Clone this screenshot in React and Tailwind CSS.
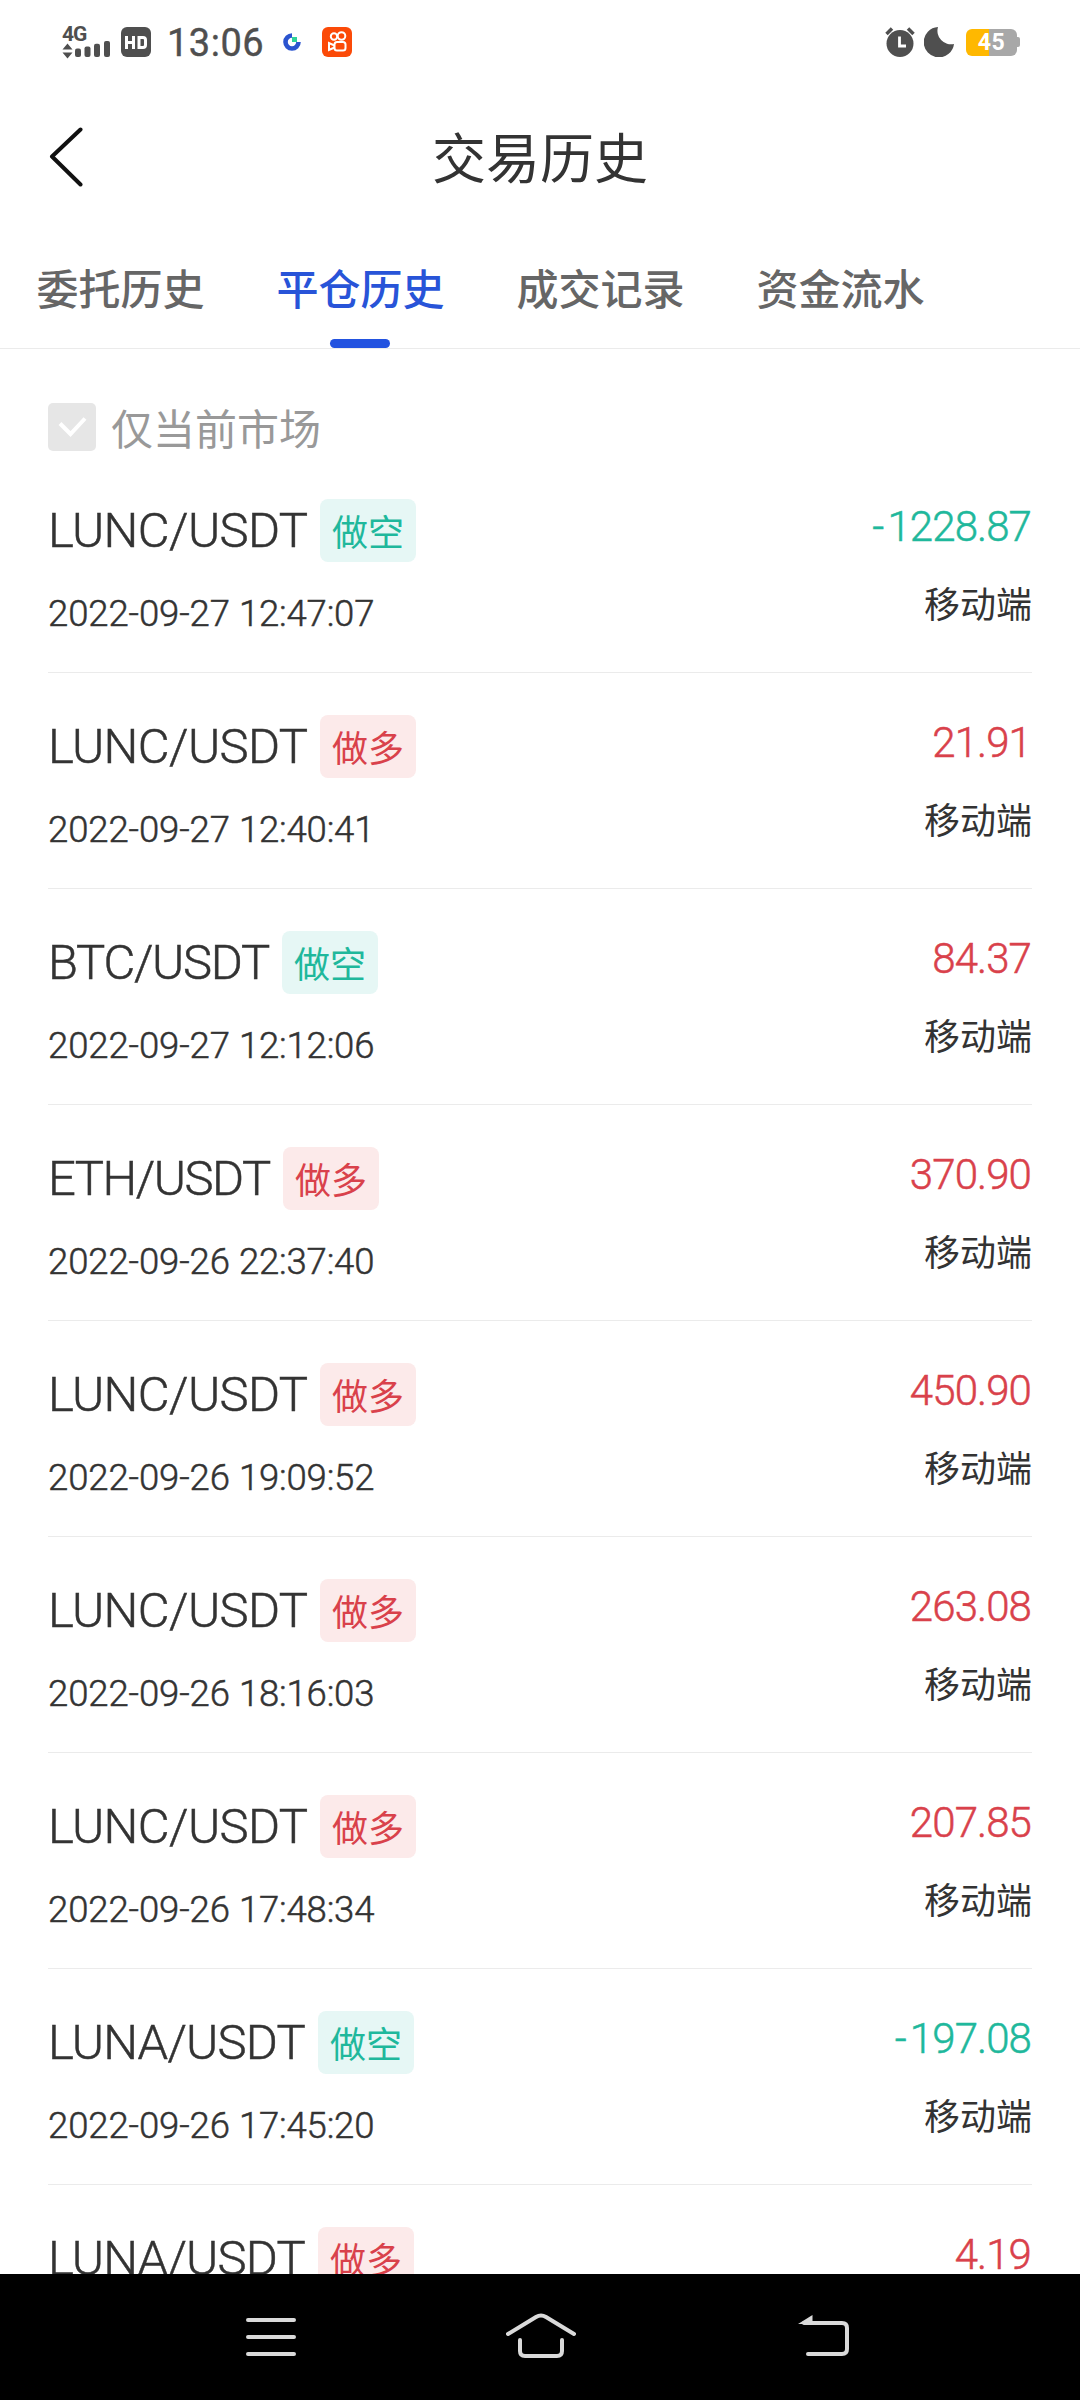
const CJK = `font-['Noto_Sans_CJK_SC',sans-serif]`;
const NUM = `font-['Roboto','Noto_Sans_CJK_SC',sans-serif]`;

const PAIRS = {
  'LUNC/USDT': 'w-[272px] tracking-[-0.6px]',
  'LUNA/USDT': 'w-[270px] tracking-[-0.8px]',
  'BTC/USDT': 'w-[234px] tracking-[-1.3px]',
  'ETH/USDT': 'w-[235px] tracking-[-1.5px]',
};

const ROWS = [
  ['LUNC/USDT', '做空', '2022-09-27', '12:47:07', '-1228.87'],
  ['LUNC/USDT', '做多', '2022-09-27', '12:40:41', '21.91'],
  ['BTC/USDT', '做空', '2022-09-27', '12:12:06', '84.37'],
  ['ETH/USDT', '做多', '2022-09-26', '22:37:40', '370.90'],
  ['LUNC/USDT', '做多', '2022-09-26', '19:09:52', '450.90'],
  ['LUNC/USDT', '做多', '2022-09-26', '18:16:03', '263.08'],
  ['LUNC/USDT', '做多', '2022-09-26', '17:48:34', '207.85'],
  ['LUNA/USDT', '做空', '2022-09-26', '17:45:20', '-197.08'],
  ['LUNA/USDT', '做多', null, null, '4.19'],
];

const TABS = ['委托历史', '平仓历史', '成交记录', '资金流水'];

function StatusBar() {
  return (
    <div className="flex h-[84px] shrink-0 items-center pl-[62px] pr-[60px] text-[#4f4f4f]">
      <div className="flex w-12 flex-col">
        <span className="font-['Roboto',sans-serif] text-[21px] font-bold leading-[18px] tracking-[-1px]">4G</span>
        <svg className="h-[16px] w-12 overflow-visible" viewBox="0 0 48 16" fill="currentColor">
          <path d="M0.5 6.5 5.5 0.5l5 6zM0.5 9.5h10l-5 6z" />
          <rect x="13" y="5.5" width="6" height="8.5" rx="2" />
          <rect x="22.5" y="3.5" width="6" height="10.5" rx="2" />
          <rect x="32" y="0.8" width="6" height="13.2" rx="2" />
          <rect x="42" y="-2" width="6" height="16" rx="2" />
        </svg>
      </div>
      <svg className="ml-[11px] size-[30px]" viewBox="0 0 30 30">
        <rect width="30" height="30" rx="6" fill="#4f4f4f" />
        <path d="M5.5 9v13M12.5 9v13M5.5 15.5h7M18 10.5h4q2.5 0 2.5 2.5v5q0 2.500-2.500 2.500h-4z" fill="none" stroke="#fff" strokeWidth="3" />
      </svg>
      <span className="ml-4 w-[98px] pt-px font-['Roboto',sans-serif] text-[38px] leading-[44px] tracking-[0.5px] [-webkit-text-stroke:0.4px]">13:06</span>
      <svg className="ml-[18px] size-[18px]" viewBox="0 0 18 18">
        <path d="M9 2.500a6.500 6.500 0 1 0 6.500 6.500" fill="none" stroke="#2b54cf" strokeWidth="4.600" />
        <rect x="9" y="4" width="5" height="5" fill="#2fd39a" />
      </svg>
      <svg className="ml-[21px] size-[30px]" viewBox="0 0 30 30">
        <rect width="30" height="30" rx="6" fill="#fb4a08" />
        <g fill="none" stroke="#fff" strokeWidth="2">
          <circle cx="12" cy="9.500" r="3.200" />
          <circle cx="19.500" cy="9" r="3.800" />
          <rect x="12.500" y="15" width="11" height="8.500" rx="2.500" />
          <path d="M12.500 18.500l-5.500-2.500v7l5.500-2.500" />
        </g>
      </svg>
      <div className="ml-auto flex items-center">
        <svg className="h-[30px] w-[30px]" viewBox="0 0 30 30">
          <circle cx="15" cy="16.500" r="13.500" fill="#4f4f4f" />
          <path d="M1.500 7 7 1.500M28.500 7 23 1.500" stroke="#4f4f4f" strokeWidth="3.500" />
          <path d="M14.500 9.500v9.500h6.500" fill="none" stroke="#fff" strokeWidth="2.800" />
        </svg>
        <svg className="ml-[9px] size-[30px]" viewBox="0 0 30 30">
          <path d="M14 0A15.200 15.200 0 1 0 30 17 13.500 13.500 0 0 1 14 0z" fill="#4f4f4f" />
        </svg>
        <div className="ml-3 flex items-center">
          <div className="flex h-[27px] w-[51px] items-center justify-center rounded-[6px] bg-[linear-gradient(90deg,#ffb800_45%,#a8a8a8_45%)] pt-px font-['Roboto',sans-serif] text-[23px] font-bold leading-none tracking-[0.500px] text-white">45</div>
          <div className="h-[10px] w-[3px] rounded-r-[2px] bg-[#a8a8a8]" />
        </div>
      </div>
    </div>
  );
}

function Header() {
  return (
    <div className="flex h-[148px] shrink-0 items-center">
      <svg className="ml-12 h-[62px] w-9" viewBox="0 0 36 62" fill="none" stroke="#111" strokeWidth="4" strokeLinecap="round" strokeLinejoin="round">
        <path d="M32.500 2.500 4 29.500l28.500 28" />
      </svg>
      <h1 className={`mb-1 mr-[84px] flex-1 text-center text-[54px] leading-[64px] text-[#333] ${CJK}`}>交易历史</h1>
    </div>
  );
}

function Tabs() {
  return (
    <div className={`flex h-[117px] shrink-0 gap-[72px] border-b border-[#ebebeb] pl-9 text-[42px] font-medium ${CJK}`}>
      {TABS.map((t, i) => (
        <div key={t} className="-mr-px flex w-[169px] flex-col items-center">
          <span className={i === 1 ? 'mt-[25px] h-[60px] whitespace-nowrap leading-[60px] text-[#2854d8]' : 'mt-[25px] h-[60px] whitespace-nowrap leading-[60px] text-[#666]'}>{t}</span>
          {i === 1 && <span className="mr-[1px] mt-[22px] h-[9px] w-[60px] rounded-full bg-[#2353e0]" />}
        </div>
      ))}
    </div>
  );
}

function Row({ row }) {
  const [pair, side, date, time, amount] = row;
  const negative = amount[0] === '-';
  return (
    <li className="flex h-[216px] shrink-0 justify-between border-b border-[#ebebeb] text-[#333]">
      <div className="pt-[42px]">
        <div className="flex h-[63px]">
          <span className={`whitespace-nowrap text-[49px] font-light leading-[64px] [-webkit-text-stroke:0.5px] ${NUM} ${PAIRS[pair]}`}>{pair}</span>
          <span className={`flex h-[63px] w-24 items-center justify-center rounded-lg text-[36px] leading-[63px] ${CJK} ${side === '做空' ? 'bg-[#e6f7f5] text-[#1fb89c]' : 'bg-[#fceaea] text-[#d9414b]'}`}>{side}</span>
        </div>
        {date && (
          <div className={`mt-[30px] flex text-[36.500px] font-light leading-[44px] [-webkit-text-stroke:0.5px] ${NUM}`}>
            <span className="w-[191px] tracking-[-0.100px]">{date}</span>
            <span className="tracking-[-0.200px]">{time}</span>
          </div>
        )}
      </div>
      <div className="flex flex-col items-end pt-[45px]">
        <span className={`mr-px text-[42px] font-light leading-[50px] tracking-[-0.900px] [-webkit-text-stroke:0.5px] ${NUM} ${negative ? 'text-[#1fb89c]' : 'text-[#d9414b]'}`}>
          {negative && <span className="mr-[4px]">-</span>}
          {negative ? amount.slice(1) : amount}
        </span>
        {date && <span className={`mt-[24px] text-[36px] leading-[52px] ${CJK}`}>移动端</span>}
      </div>
    </li>
  );
}

function NavBar() {
  return (
    <div className="flex h-[126px] shrink-0 items-center bg-black pl-[246px]">
      <svg className="h-[50px] w-[50px]" viewBox="0 0 50 50" stroke="#dadada" strokeWidth="4" strokeLinecap="round">
        <path d="M2 8h46M2 25h46M2 42h46" />
      </svg>
      <svg className="ml-[210px] h-[50px] w-[70px]" viewBox="0 0 70 50" fill="none" stroke="#dadada" strokeWidth="4" strokeLinecap="round">
        <path d="M2 22 30 5q5-3 10 0l28 17M14 28v11q0 5 5 5h32q5 0 5-5V28" />
      </svg>
      <svg className="ml-[222px] h-[50px] w-[52px]" viewBox="0 0 52 50" fill="none" stroke="#dadada" strokeWidth="4" strokeLinecap="round">
        <path d="M6 11h38q5 0 5 5v21q0 5-5 5H10" />
        <path d="M0 12 14.500 3v9z" fill="#dadada" stroke="none" />
      </svg>
    </div>
  );
}

export default function App() {
  return (
    <div className="flex h-[2400px] w-[1080px] flex-col overflow-hidden bg-white">
      <StatusBar />
      <Header />
      <Tabs />
      <main className="flex min-h-0 flex-1 flex-col overflow-hidden px-12 pt-[54px]">
        <label className="mb-[6px] flex h-12 shrink-0 items-center">
          <span className="flex size-12 items-center justify-center rounded-[5px] bg-[#e6e6e6]">
            <svg className="size-12" viewBox="0 0 48 48" fill="none" stroke="#fff" strokeWidth="4">
              <path d="M12 20.500l10.500 10.500L37 15.500" />
            </svg>
          </span>
          <span className={`ml-[15px] text-[42px] leading-[48px] text-[#999] ${CJK}`}>仅当前市场</span>
        </label>
        <ul className="flex flex-col">
          {ROWS.map((r, i) => (
            <Row key={i} row={r} />
          ))}
        </ul>
      </main>
      <NavBar />
    </div>
  );
}
